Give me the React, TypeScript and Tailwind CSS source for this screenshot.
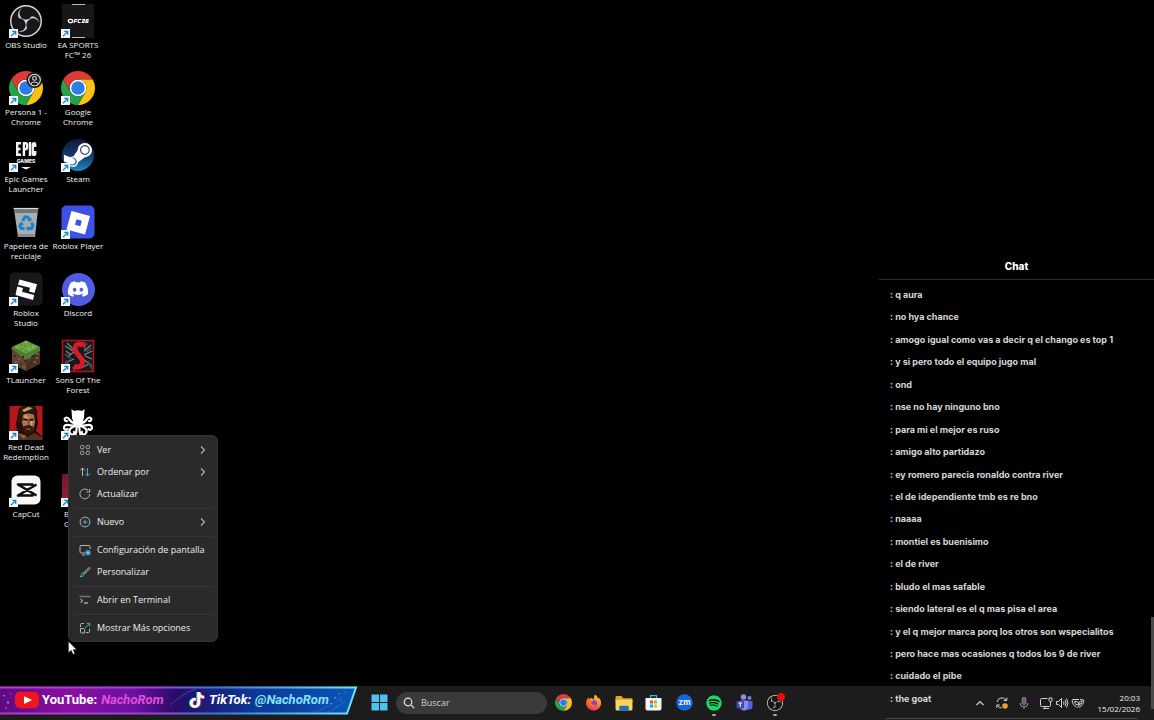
import React from "react";
import { FaSteamSymbol, FaDiscord, FaSpotify, FaTiktok } from "react-icons/fa";
import { SiObsstudio } from "react-icons/si";

function ObsLogo({ className = "" }: { className?: string }) {
  return (
    <span className={`grid place-items-center rounded-full bg-[#17171a] text-[#d6d6d6] ${className}`}>
      <SiObsstudio className="size-full" />
    </span>
  );
}

function ChromeLogo({ className = "" }: { className?: string }) {
  return (
    <svg viewBox="0 0 48 48" className={className} aria-hidden="true">
      <circle cx="24" cy="24" r="12" fill="#fff" />
      <path fill="#dc3b34" d="M24 12H44.78a24 24 0 0 0-41.56 0L13.6 30A12 12 0 0 1 24 12Z" />
      <path fill="#fbc117" d="M34.39 30 24 48A24 24 0 0 0 44.78 12H24A12 12 0 0 1 34.39 30Z" />
      <path fill="#25a24a" d="M13.61 30 3.22 12A24 24 0 0 0 24 48L34.39 30a12 12 0 0 1-20.78 0Z" />
      <circle cx="24" cy="24" r="9.5" fill="#2b7de9" />
    </svg>
  );
}

function FcArt() {
  return (
    <svg viewBox="0 0 34 34" className="size-[34px]" aria-hidden="true">
      <rect x="1" width="32" height="34" fill="#17171a" />
      <path d="M11 .5h13M11 33.5h13" stroke="#bbb" />
      <ellipse cx="9.5" cy="17" rx="2.2" ry="1.700" fill="none" stroke="#fff" strokeWidth="1.200" />
      <g fill="none" stroke="#fff" strokeWidth="1.100">
        <path d="M13 19l.9-3.500h2.600M13.500 17.300h2.400M20.300 15.500h-2q-.7 0-1 1l-.3 1.100q-.2.900.6.900h2" />
        <path d="M21.300 15.500h2.300l-.3 1.500h-1.600l-.4 1.500h2.300M27.800 15.500h-1.600q-.7 0-1 1l-.4 2h1.900l.4-1.500h-1.900" />
      </g>
    </svg>
  );
}

function ChromeProfile() {
  return (
    <span className="relative block size-[34px]">
      <ChromeLogo className="size-[34px]" />
      <svg viewBox="0 0 34 34" className="absolute inset-0 size-[34px]" aria-hidden="true">
        <circle cx="25.5" cy="9" r="8" fill="#1b1b1b" />
        <circle cx="25.5" cy="9" r="5.8" fill="none" stroke="#ddd" strokeWidth="1.100" />
        <circle cx="25.5" cy="7.4" r="1.9" fill="none" stroke="#ddd" strokeWidth="1.100" />
        <path d="M21.8 12.6c1.6-2.2 5.8-2.2 7.4 0" fill="none" stroke="#ddd" strokeWidth="1.100" />
      </svg>
    </span>
  );
}

function EpicArt() {
  return (
    <svg viewBox="0 0 34 34" className="size-[34px]" aria-hidden="true">
      <g fill="none" stroke="#f2f2f2" strokeWidth="2.4">
        <path d="M12 5.2H8.2v11.6H12M8.2 11h3.3" />
        <path d="M14.9 18V5.2h1.6q1.6 0 1.6 1.6v2.8q0 1.6-1.6 1.6H15" />
        <path d="M21 4v14" />
        <path d="M26.2 9V6.6q0-1.5-1.2-1.5t-1.2 1.5v8.8q0 1.5 1.2 1.5t1.2-1.5V13" />
      </g>
      <text x="17" y="25" textAnchor="middle" fontFamily="Inter, sans-serif" fontSize="5" fontWeight="800" fill="#f2f2f2">GAMES</text>
      <path d="M12 29h10l-5 2.4Z" fill="#f2f2f2" />
    </svg>
  );
}

function SteamArt() {
  return (
    <span className="grid size-8 place-items-center overflow-hidden rounded-full bg-linear-to-b from-[#101a3a] via-[#123b6b] to-[#1b87c0] text-white">
      <FaSteamSymbol className="size-8" />
    </span>
  );
}

function BinArt() {
  return (
    <svg viewBox="0 0 34 34" className="size-[34px]" aria-hidden="true">
      <path d="M5 4h24l-3 28H9Z" fill="#a8adb0" />
      <path d="M5 4h24l-.5 4h-23Z" fill="#6f7578" />
      <path d="M4.500 3.500h25" stroke="#d8dcde" strokeWidth="1.200" />
      <path d="M9.500 32h15.500l.4-3H9.100Z" fill="#868b8e" />
      <g fill="none" stroke="#1685d3" strokeWidth="3">
        <path d="M13.600 16l2.400-4h2.500l2 3" />
        <path d="M22.300 17.500l1.700 3-1.500 3h-3.500" />
        <path d="M15.500 23.500h-3.200l-1.400-2.500 1.500-3" />
      </g>
      <path d="M18.500 16.500l4.200-.5-.7-4ZM19.500 21v5l-3-2.500ZM10 18.500l3.500-1.500 1.500 3.500Z" fill="#1685d3" />
    </svg>
  );
}

function RobloxArt() {
  return (
    <svg viewBox="0 0 34 34" className="size-[34px]" aria-hidden="true">
      <rect x="0.500" y="0.500" width="33" height="33" rx="5" fill="#3a53e6" />
      <path fillRule="evenodd" fill="#fff" d="M10.500 6 29 11 24 29.500 5.500 24.500ZM15.500 14.300 14 19.800l5.300 1.500 1.500-5.500Z" />
    </svg>
  );
}

function RobloxStudioArt() {
  return (
    <svg viewBox="0 0 34 34" className="size-[34px]" aria-hidden="true">
      <rect x="0.500" y="0.500" width="33" height="33" rx="5" fill="#18181a" />
      <path fill="#fff" d="M10.500 7.500 28 12.200 25.500 21l-5.500-1.500 1-3.700L9 12.700ZM8.300 14.500l5.700 1.500-1 3.700 12.200 3.200L24 28 6.500 23Z" />
    </svg>
  );
}

function DiscordArt() {
  return (
    <span className="grid size-[33px] place-items-center rounded-full bg-[#515de0] text-white">
      <FaDiscord className="size-[22px]" />
    </span>
  );
}

const grassTop = [
  [12, 5], [17, 3], [22, 5], [8, 8], [16, 7], [24, 8], [13, 10], [20, 10], [17, 12],
];
const dirt = [
  [5, 16], [9, 19], [13, 17], [6, 22], [11, 24], [14, 27], [8, 26], [19, 18], [23, 16],
  [27, 18], [21, 23], [25, 22], [19, 27], [28, 14], [15, 21],
];

function BlockArt() {
  return (
    <svg viewBox="0 0 34 34" className="size-[34px]" aria-hidden="true">
      <path d="M17 1.500 31 8v17L17 32 3 25V8Z" fill="#4a3325" />
      <path d="M17 15v17L3 25V8Z" fill="#5f4330" />
      <path d="M17 1.500 31 8 17 15 3 8Z" fill="#69a544" />
      <path d="M3 8l14 7 14-7v4l-3 1v2l-3 0v1l-3 1v2l-3 0-2 2-3-2v-1l-3-1v-2l-3 0v-2l-3-1v-2l-3 1Z" fill="#4d8131" />
      {grassTop.map(([x, y], i) => (
        <path key={i} d={`M${x - 1.5} ${y}l1.5-.8 1.5.8-1.5.8Z`} fill={i % 2 ? "#8cc65f" : "#487f2d"} />
      ))}
      {dirt.map(([x, y], i) => (
        <rect key={i} x={x} y={y} width="2" height="2" fill={i % 2 ? "#80604a" : "#38281d"} />
      ))}
    </svg>
  );
}

function ForestArt() {
  return (
    <svg viewBox="0 0 34 34" className="size-[34px]" aria-hidden="true">
      <rect x="1.500" y="1.500" width="31" height="31" fill="#15191b" stroke="#b3121f" strokeWidth="1.600" />
      <g stroke="#7b8689" strokeWidth="1.300" fill="none">
        <path d="M4 7l8 5M6 18l7-5M4 24l9-4M30 6l-7 6M31 12l-8 4M22 20l9 7M24 17l7 3M6 4l6 6M20 29l8-4M5 12l5 4" />
      </g>
      <g stroke="#3c4548" strokeWidth="2" fill="none">
        <path d="M4 15l6 5M26 4l-3 5M25 13l5-4M27 22l4 8M5 21l4 8" />
      </g>
      <path d="M22.500 7C20 3.500 14 4.500 14 10c0 5 7.500 7.500 7.500 13 0 5-5 6-8.500 4" fill="none" stroke="#d51c25" strokeWidth="5" />
      <path d="M11 28l2 4 3-3ZM20 4l4-1v8Z" fill="#d51c25" />
    </svg>
  );
}

function RedDeadArt() {
  return (
    <svg viewBox="0 0 34 34" className="size-[34px]" aria-hidden="true">
      <rect x="0.500" width="33" height="34" fill="#b5161c" />
      <path d="M9 8C9 1 14-1 20-1s9 4 8 9l1 10-2 7 6 5v4H1v-6l7-4-1-6Z" fill="#20110d" />
      <path d="M14 9c3-2 8-2 11 0l1 7-2 8-4 3-4-2-3-8Z" fill="#b0714d" />
      <path d="M16 8l3 3-2 5-3-1ZM21 14l3-1-1 7-2 1Z" fill="#d79c70" />
      <path d="M10 6c2-5 8-7 14-5l3 7c-5-3-11-3-15 2l-1 9-2-4Z" fill="#2b1a12" />
      <path d="M13 4l6-3 5 1-4 2-5 2Z" fill="#c9a05a" />
      <path d="M14 13.200l4.500.8M20.500 14l4-.6" stroke="#1d0e0a" strokeWidth="2" />
      <path d="M19.500 14l1 5-2 .6" fill="none" stroke="#6d3c28" strokeWidth="1.200" />
      <path d="M14 21c3-2.500 8-2.500 10.500 0L23 26l-4 2.500-4-3Z" fill="#34190f" />
      <path d="M17 23h4.500" stroke="#a3644b" strokeWidth="1.100" />
      <path d="M3 34l6-7 7 2 3 2 6-4 8 4v3Z" fill="#553322" />
      <path d="M9 27l6 6 2-3Z" fill="#8f6a4a" />
    </svg>
  );
}

function OctopusArt() {
  return (
    <svg viewBox="0 0 34 34" className="size-[34px]" aria-hidden="true">
      <path d="M10.500 3l2.500 2q4-1.500 8 0l2.500-2-.5 9-2.500 7h-7L11 12Z" fill="#fff" />
      <g fill="none" stroke="#fff" strokeWidth="2.200" strokeLinecap="round">
        <path d="M14 17C8 17 9 11 5.500 11.500 2.500 12 3.500 15.500 6 15" />
        <path d="M14 19c-5 2-8-2-10.500 1C2 23 5 25 6.500 23" />
        <path d="M15 20c-5 1-8 4-6 7s5 1 4-1" />
        <path d="M16 20c-1 4 0 9-3 10" />
        <path d="M20 17c6 0 5-6 8.500-5.500 3 .5 2 4-.5 3.500" />
        <path d="M20 19c5 2 8-2 10.500 1 1.500 3-1.500 5-3 3" />
        <path d="M19 20c5 1 8 4 6 7s-5 1-4-1" />
        <path d="M18 20c1 4 0 9 3 10" />
      </g>
    </svg>
  );
}

function CapCutArt() {
  return (
    <svg viewBox="0 0 34 34" className="size-[34px]" aria-hidden="true">
      <rect x="2.500" y="2.500" width="29" height="29" rx="6" fill="#f7f7f7" />
      <path d="M27.500 11.500 9 22.500h14.500v-3.500M27.500 22.500 9 11.500h14.500v3.500" fill="none" stroke="#0c0c0c" strokeWidth="2.600" strokeLinejoin="round" />
    </svg>
  );
}

function RedArt() {
  return (
    <span className="block size-[33px] bg-linear-to-b from-[#6d1a29] to-[#a3203a]" />
  );
}

function ShortcutBadge() {
  return (
    <svg viewBox="0 0 9 9" className="absolute bottom-0 left-0 size-[9px]" aria-hidden="true">
      <rect width="9" height="9" fill="#f4f8fb" />
      <path d="M2 7.200 6.300 2.900M3.200 2.300h3.500v3.500" fill="none" stroke="#1c84c4" strokeWidth="1.300" />
    </svg>
  );
}

type Shortcut = { lines: string[]; art: React.ReactNode; badge?: boolean; clipped?: boolean };

const shortcuts: Shortcut[] = [
  { lines: ["OBS Studio"], art: <ObsLogo className="size-8" /> },
  { lines: ["EA SPORTS", "FC™ 26"], art: <FcArt /> },
  { lines: ["Persona 1 -", "Chrome"], art: <ChromeProfile /> },
  { lines: ["Google", "Chrome"], art: <ChromeLogo className="size-[34px]" /> },
  { lines: ["Epic Games", "Launcher"], art: <EpicArt /> },
  { lines: ["Steam"], art: <SteamArt /> },
  { lines: ["Papelera de", "reciclaje"], art: <BinArt />, badge: false },
  { lines: ["Roblox Player"], art: <RobloxArt /> },
  { lines: ["Roblox", "Studio"], art: <RobloxStudioArt /> },
  { lines: ["Discord"], art: <DiscordArt /> },
  { lines: ["TLauncher"], art: <BlockArt /> },
  { lines: ["Sons Of The", "Forest"], art: <ForestArt /> },
  { lines: ["Red Dead", "Redemption"], art: <RedDeadArt /> },
  { lines: [], art: <OctopusArt /> },
  { lines: ["CapCut"], art: <CapCutArt /> },
  { lines: ["B", "G"], art: <RedArt />, clipped: true },
];

function DesktopIcon({ lines, art, badge = true, clipped = false }: Shortcut) {
  return (
    <button type="button" className="flex h-[67px] w-[52px] flex-col items-center pt-1">
      <span className="relative grid size-[34px] shrink-0 place-items-center">
        {art}
        {badge && <ShortcutBadge />}
      </span>
      <span className={`mt-0.5 whitespace-nowrap text-[8px] leading-[10px] ${clipped ? "self-start pl-3 text-left" : "text-center"}`}>
        {lines.map((l) => (
          <span key={l} className="block">{l}</span>
        ))}
      </span>
    </button>
  );
}

function MenuIcon({ children }: { children: React.ReactNode }) {
  return (
    <svg viewBox="0 0 12 12" className="size-3 shrink-0" fill="none" stroke="#b4b4b4" strokeWidth="1" aria-hidden="true">
      {children}
    </svg>
  );
}

type MenuEntry = { label: string; icon: React.ReactNode; more?: boolean };

const menuGroups: MenuEntry[][] = [
  [
    {
      label: "Ver",
      more: true,
      icon: (
        <>
          <rect x="1.500" y="1.500" width="3.300" height="3.300" rx="1.200" />
          <rect x="7.200" y="1.500" width="3.300" height="3.300" rx="1.200" />
          <rect x="1.500" y="7.200" width="3.300" height="3.300" rx="1.200" />
          <rect x="7.200" y="7.200" width="3.300" height="3.300" rx="1.200" />
        </>
      ),
    },
    {
      label: "Ordenar por",
      more: true,
      icon: (
        <>
          <path d="M3.500 10V2M1 4.500 3.500 2 6 4.500" />
          <path d="M8.500 2v8M6 7.500 8.500 10 11 7.500" stroke="#4aa5d8" />
        </>
      ),
    },
    { label: "Actualizar", icon: <path d="M10.700 6A4.900 4.900 0 1 1 9 2.200M10.700 1v3H7.500" /> },
  ],
  [
    {
      label: "Nuevo",
      more: true,
      icon: (
        <>
          <circle cx="6" cy="6" r="4.900" />
          <path d="M6 3.600v4.800M3.600 6h4.800" stroke="#4aa5d8" />
        </>
      ),
    },
  ],
  [
    {
      label: "Configuración de pantalla",
      icon: (
        <>
          <path d="M6 9H2q-1 0-1-1V2.500q0-1 1-1h8q1 0 1 1V5M3 11h3" />
          <circle cx="9" cy="8.700" r="2.300" fill="#3b8fc9" stroke="#4aa5d8" />
          <circle cx="9" cy="8.700" r="0.700" fill="#fff" stroke="none" />
        </>
      ),
    },
    {
      label: "Personalizar",
      icon: (
        <>
          <path d="M4.500 7 10 1.500q1 0 1 1L5.500 8Z" />
          <path d="M4.500 7 5.500 8q-.5 3-4.500 2.800Q2.500 10 2.500 8.500T4.500 7Z" stroke="#4aa5d8" />
        </>
      ),
    },
  ],
  [
    {
      label: "Abrir en Terminal",
      icon: (
        <>
          <path d="M.5 2.500h11" stroke="#777" strokeWidth="1.500" />
          <path d="M1.500 5l2 1.800-2 1.700M5 9h4" stroke="#e8e8e8" />
        </>
      ),
    },
  ],
  [
    {
      label: "Mostrar Más opciones",
      icon: (
        <>
          <path d="M5 1.500H2.500q-1 0-1 1V5M1.500 6.500h3q1 0 1 1v3.500h-3q-1 0-1-1ZM7 10.500h2.500q1 0 1-1V7" />
          <path d="M6 6l4.500-4.500M7.500 1.300h3.200v3.200" stroke="#35b59a" />
        </>
      ),
    },
  ],
];

function ContextMenu() {
  return (
    <div role="menu" className="absolute left-[68px] top-[435px] w-[150px] rounded-md border border-[#353535] bg-[#2a2a2a] pb-0.5 pt-[3px] text-[#ececec]">
      {menuGroups.map((group, g) => (
        <div key={g}>
          {g > 0 && (
            <div className="flex h-1.5 items-center px-1">
              <div className="h-px flex-1 bg-[#363636]" />
            </div>
          )}
          {group.map((item) => (
            <button key={item.label} type="button" role="menuitem" className="flex h-[22px] w-full items-center gap-1.5 px-2.5 text-left text-[9px] font-medium leading-[12px]">
              <MenuIcon>{item.icon}</MenuIcon>
              <span className="flex-1 whitespace-nowrap">{item.label}</span>
              {item.more && (
                <svg viewBox="0 0 8 10" className="h-2.5 w-2" fill="none" stroke="#b4b4b4" strokeWidth="1.100" aria-hidden="true">
                  <path d="M2 1.500 5.500 5 2 8.500" />
                </svg>
              )}
            </button>
          ))}
        </div>
      ))}
    </div>
  );
}

const messages = [
  "q aura",
  "no hya chance",
  "amogo igual como vas a decir q el chango es top 1",
  "y si pero todo el equipo jugo mal",
  "ond",
  "nse no hay ninguno bno",
  "para mi el mejor es ruso",
  "amigo alto partidazo",
  "ey romero parecia ronaldo contra river",
  "el de idependiente tmb es re bno",
  "naaaa",
  "montiel es buenisimo",
  "el de river",
  "bludo el mas safable",
  "siendo lateral es el q mas pisa el area",
  "y el q mejor marca porq los otros son wspecialitos",
  "pero hace mas ocasiones q todos los 9 de river",
  "cuidado el pibe",
  "the goat",
];

function ChatOverlay() {
  return (
    <section className="pointer-events-none absolute bottom-0 right-0 flex h-[468px] w-[275px] flex-col font-['Inter',sans-serif] text-[#d6d6d6]">
      <h2 className="border-b border-[#2c2c2c] pb-1.5 pt-2 text-center text-[10px] font-extrabold leading-[13px] text-white">Chat</h2>
      <ul className="flex flex-1 flex-col justify-between pb-3.5 pl-[11px] pt-2 text-[9px] font-bold leading-[14px]">
        {messages.map((m) => (
          <li key={m} className="whitespace-nowrap">: {m}</li>
        ))}
      </ul>
      <div className="absolute bottom-[11px] right-0 h-[92px] w-[3px] bg-[#4a4a4a]" />
      <div className="absolute bottom-0 left-1.5 right-4 h-0.5 rounded-t border-t border-[#4a4a4a]" />
    </section>
  );
}

function Banner() {
  return (
    <div className="relative h-[29px] w-[358px] shrink-0 self-start font-['Roboto',sans-serif] font-bold text-white">
      <svg viewBox="0 0 358 30" preserveAspectRatio="none" className="absolute inset-0 size-full" aria-hidden="true">
        <defs>
          <linearGradient id="fill" x1="0" x2="1">
            <stop offset="0" stopColor="#5b0a80" />
            <stop offset=".2" stopColor="#8a0fa0" />
            <stop offset=".38" stopColor="#6a11a0" />
            <stop offset=".5" stopColor="#270c66" />
            <stop offset=".7" stopColor="#0d3590" />
            <stop offset="1" stopColor="#0b56b8" />
          </linearGradient>
          <linearGradient id="edge" x1="0" x2="1">
            <stop offset="0" stopColor="#b63ad0" />
            <stop offset=".45" stopColor="#a13fdc" />
            <stop offset=".6" stopColor="#3b74dc" />
            <stop offset="1" stopColor="#6be6f8" />
          </linearGradient>
        </defs>
        <path d="M-3 1.500H356L347 28.500H-3Z" fill="url(#fill)" stroke="url(#edge)" strokeWidth="2" />
        <path d="M170 20q12-12 26-17M310 28q18-4 32-17M325 28q10-3 20-12" fill="none" stroke="#4b78e8" strokeOpacity=".5" />
        <g fill="#d58bf0">
          <circle cx="4" cy="10" r=".8" />
          <circle cx="8" cy="17" r="1" />
          <circle cx="11" cy="8" r=".6" />
          <circle cx="6" cy="23" r=".7" />
        </g>
        <g fill="#4fa8f2">
          <circle cx="331" cy="18" r=".8" />
          <circle cx="335" cy="12" r=".9" />
          <circle cx="339" cy="8" r=".7" />
          <circle cx="341" cy="15" r=".7" />
          <circle cx="336" cy="21" r=".6" />
          <circle cx="345" cy="7" r=".6" />
        </g>
        <rect x="15" y="6" width="24" height="17" rx="5" fill="#ee1620" />
        <path d="M24 10.500v8l8-4Z" fill="#fff" />
      </svg>
      <div className="relative flex h-full items-center pb-0.5 pl-[42px] text-[13px] leading-[18px]">
        <a href="#youtube" className="flex w-[147px] gap-1">
          <span>YouTube:</span>
          <em className="text-[#e04fd8]">NachoRom</em>
        </a>
        <a href="#tiktok" className="flex items-center gap-1 italic">
          <span className="relative block size-4">
            <FaTiktok className="absolute -left-px top-0 size-4 text-[#25f4ee]" />
            <FaTiktok className="absolute left-px top-0 size-4 text-[#fe2c55]" />
            <FaTiktok className="absolute left-0 top-0 size-4 text-white" />
          </span>
          <span>TikTok:</span>
          <span className="text-[#86e2fa]">@NachoRom</span>
        </a>
      </div>
    </div>
  );
}

function FirefoxLogo() {
  return (
    <svg viewBox="0 0 34 34" className="size-[17px]" aria-hidden="true">
      <defs>
        <linearGradient id="ff" x1=".8" y1="0" x2=".3" y2="1">
          <stop offset="0" stopColor="#ffd43b" />
          <stop offset=".45" stopColor="#ff8a1f" />
          <stop offset="1" stopColor="#ef2b57" />
        </linearGradient>
      </defs>
      <path d="M20 1c4 3 5 5 6 8l1-2c4 4 6 8 5 13-1 8-8 13-15 13S2 27 2 19c0-5 2-9 5-12l1 4 3-3c3 0 5 1 7 3 0-4 0-7 2-10Z" fill="url(#ff)" />
      <circle cx="17" cy="19" r="7" fill="#7b45dd" />
      <path d="M8 14c4-3 8-2 11 0-3 0-4 2-7 3 1 5 7 6 11 3-2 7-14 8-15-2Z" fill="#ff7a24" />
    </svg>
  );
}

function ExplorerLogo() {
  return (
    <svg viewBox="0 0 34 34" className="size-[18px]" aria-hidden="true">
      <path d="M1 6q0-2 2-2h9l4 4h15q2 0 2 2v5H1Z" fill="#e3a520" />
      <path d="M1 11h32v18q0 2-2 2H3q-2 0-2-2Z" fill="#fbd35d" />
      <path d="M8 31v-7q0-2 2-2h14q2 0 2 2v7Z" fill="#1577b8" />
    </svg>
  );
}

function StoreLogo() {
  return (
    <svg viewBox="0 0 34 34" className="size-[17px]" aria-hidden="true">
      <path d="M11 9V3h12v6" fill="none" stroke="#35b7ea" strokeWidth="2.500" />
      <path d="M1 8h32v21q0 4-4 4H5q-4 0-4-4Z" fill="#f1f5f8" />
      <path d="M10 13h6v6h-6Z" fill="#f1511b" />
      <path d="M18 13h6v6h-6Z" fill="#80cc28" />
      <path d="M10 21h6v6h-6Z" fill="#00adef" />
      <path d="M18 21h6v6h-6Z" fill="#fbbc09" />
    </svg>
  );
}

function ZoomLogo() {
  return (
    <svg viewBox="0 0 34 34" className="size-[17px]" aria-hidden="true">
      <circle cx="17" cy="17" r="16.500" fill="#1763e6" />
      <text x="17" y="22" textAnchor="middle" fontFamily="Inter, sans-serif" fontSize="16" fontWeight="700" fill="#fff">zm</text>
    </svg>
  );
}

function TeamsLogo() {
  return (
    <svg viewBox="0 0 34 34" className="size-[17px]" aria-hidden="true">
      <circle cx="15" cy="6" r="5.500" fill="#8a90f0" />
      <circle cx="27" cy="8" r="4" fill="#7a7ae8" />
      <path d="M21 14h12v11q0 6-6 6h-6Z" fill="#5a62d6" />
      <path d="M8 13h16v12q0 8-8 8t-8-8Z" fill="#868df0" />
      <rect x="1" y="14" width="15" height="15" rx="2" fill="#4046b0" />
      <path d="M5 18h7M8.500 18v8" stroke="#fff" strokeWidth="2" />
    </svg>
  );
}

const apps: { name: string; icon: React.ReactNode; open?: boolean }[] = [
  { name: "Google Chrome", icon: <ChromeLogo className="size-[17px]" /> },
  { name: "Firefox", icon: <FirefoxLogo /> },
  { name: "Explorador de archivos", icon: <ExplorerLogo /> },
  { name: "Microsoft Store", icon: <StoreLogo /> },
  { name: "Zoom", icon: <ZoomLogo /> },
  {
    name: "Spotify",
    open: true,
    icon: (
      <span className="rounded-full bg-black text-[#1ed760]">
        <FaSpotify className="size-4" />
      </span>
    ),
  },
  { name: "Teams", icon: <TeamsLogo /> },
  {
    name: "OBS",
    open: true,
    icon: (
      <span className="relative">
        <ObsLogo className="size-4" />
        <span className="absolute -right-0.5 -top-0.5 size-2 rounded-full bg-[#e80c0c]" />
      </span>
    ),
  },
];

function Tray() {
  const cls = "size-3.5";
  const common = { viewBox: "0 0 14 14", fill: "none", stroke: "#d2d2d2", "aria-hidden": true } as const;
  return (
    <div className="ml-auto flex items-center pr-3.5">
      <button type="button" aria-label="Iconos ocultos" className="flex w-[22px] justify-center">
        <svg {...common} className={cls}><path d="M3.500 9 7 5.500 10.500 9" strokeWidth="1.200" /></svg>
      </button>
      <button type="button" aria-label="Actualización" className="flex w-[22px] justify-center">
        <svg {...common} className={cls}>
          <path d="M2 6a5 5 0 0 1 9-2M11.800 1.500v3H8.800M1.800 12V9h3M2.500 9.500A5 5 0 0 0 6.500 12" />
          <circle cx="10" cy="10" r="2.800" fill="#f0a020" stroke="none" />
        </svg>
      </button>
      <button type="button" aria-label="Micrófono" className="flex w-[22px] justify-center">
        <svg {...common} className={cls} stroke="#a58aae">
          <rect x="5.200" y="1.500" width="3.600" height="7" rx="1.800" fill="#6d4f78" />
          <path d="M3 7a4 4 0 0 0 8 0M7 11v2" />
        </svg>
      </button>
      <button type="button" aria-label="Red, volumen y seguridad" className="ml-1 flex gap-0.5">
        <svg {...common} className={cls}>
          <path d="M8.500 2.500H2.500q-1 0-1 1v6q0 1 1 1h8q1 0 1-1V8M4 12.500h6M6 10.500v2" />
          <path d="M10 2h3v2.500q0 1-1.500 1T10 4.500ZM11.500 5.500V8" />
        </svg>
        <svg {...common} className={cls}>
          <path d="M1.500 5.500h2l3-3v9l-3-3h-2ZM8.500 5.500q1 1.500 0 3M10 4q2.200 3 0 6M11.500 2.500q3 4.500 0 9" />
        </svg>
        <svg {...common} className={cls}>
          <path d="M8 3.500H2q-.8 0-.8.800 0 4.700 4.300 6.700M9 3.200q2 .8 3.800.8 0 5-4.800 7.500" />
          <path d="M3.500 5.500q4-.3 4.500 2-1 2-3 1Q3.500 7.800 3.500 5.500ZM11 5Q7 5.500 7.500 8.500 11 9 11 5ZM6.500 11.500l3-4.500" />
        </svg>
      </button>
      <time className="ml-2.5 w-[45px] whitespace-nowrap text-right text-[8px] leading-[11px]">
        <span className="block">20:03</span>
        <span className="block">15/02/2026</span>
      </time>
    </div>
  );
}

function Taskbar() {
  return (
    <footer className="flex h-[34px] shrink-0 items-center bg-[#1c1c1c] pb-px">
      <Banner />
      <button type="button" aria-label="Inicio" className="ml-3 grid w-[18px] place-items-center">
        <svg viewBox="0 0 17 17" className="size-[17px]" fill="#4cc2f1" aria-hidden="true">
          <path d="M.5.5H8V8H.5ZM9 .5h7.500V8H9ZM.5 9H8v7.500H.5ZM9 9h7.500v7.500H9Z" />
        </svg>
      </button>
      <label className="ml-2 flex h-[22px] w-[151px] items-center gap-1.5 rounded-full bg-[#3a3a3a] pl-[7px]">
        <svg viewBox="0 0 12 12" className="size-3" fill="none" stroke="#e6e6e6" strokeWidth="1.200" aria-hidden="true">
          <circle cx="5" cy="5" r="3.800" />
          <path d="M8 8l3.200 3.200" />
        </svg>
        <input aria-label="Buscar" placeholder="Buscar" className="w-24 bg-transparent text-[9px] leading-[12px] outline-none placeholder:text-[#cfcfcf]" />
      </label>
      <nav className="ml-px flex w-[242px] justify-between">
        {apps.map((a) => (
          <button key={a.name} type="button" aria-label={a.name} className="relative grid h-[30px] w-[30px] place-items-center">
            {a.icon}
            {a.open && <span className="absolute bottom-0.5 left-[13px] h-0.5 w-1 rounded bg-[#a5a5a5]" />}
          </button>
        ))}
      </nav>
      <Tray />
    </footer>
  );
}

export default function App() {
  return (
    <div className="relative flex min-h-screen flex-col bg-black font-['Open_Sans','Noto_Sans',sans-serif] text-[#f0f0f0]">
      <main className="flex-1">
        <div className="grid w-fit grid-cols-2">
          {shortcuts.map((s, i) => (
            <DesktopIcon key={i} {...s} />
          ))}
        </div>
      </main>
      <Taskbar />
      <ContextMenu />
      <svg viewBox="0 0 9 14" className="absolute left-[68px] top-[641px] h-3.5 w-[9px]" aria-hidden="true">
        <path d="M.5.500v11l2.700-2.300 1.800 4 1.800-.8-1.700-3.900h3.400Z" fill="#fff" stroke="#333" strokeWidth=".5" />
      </svg>
      <ChatOverlay />
    </div>
  );
}
